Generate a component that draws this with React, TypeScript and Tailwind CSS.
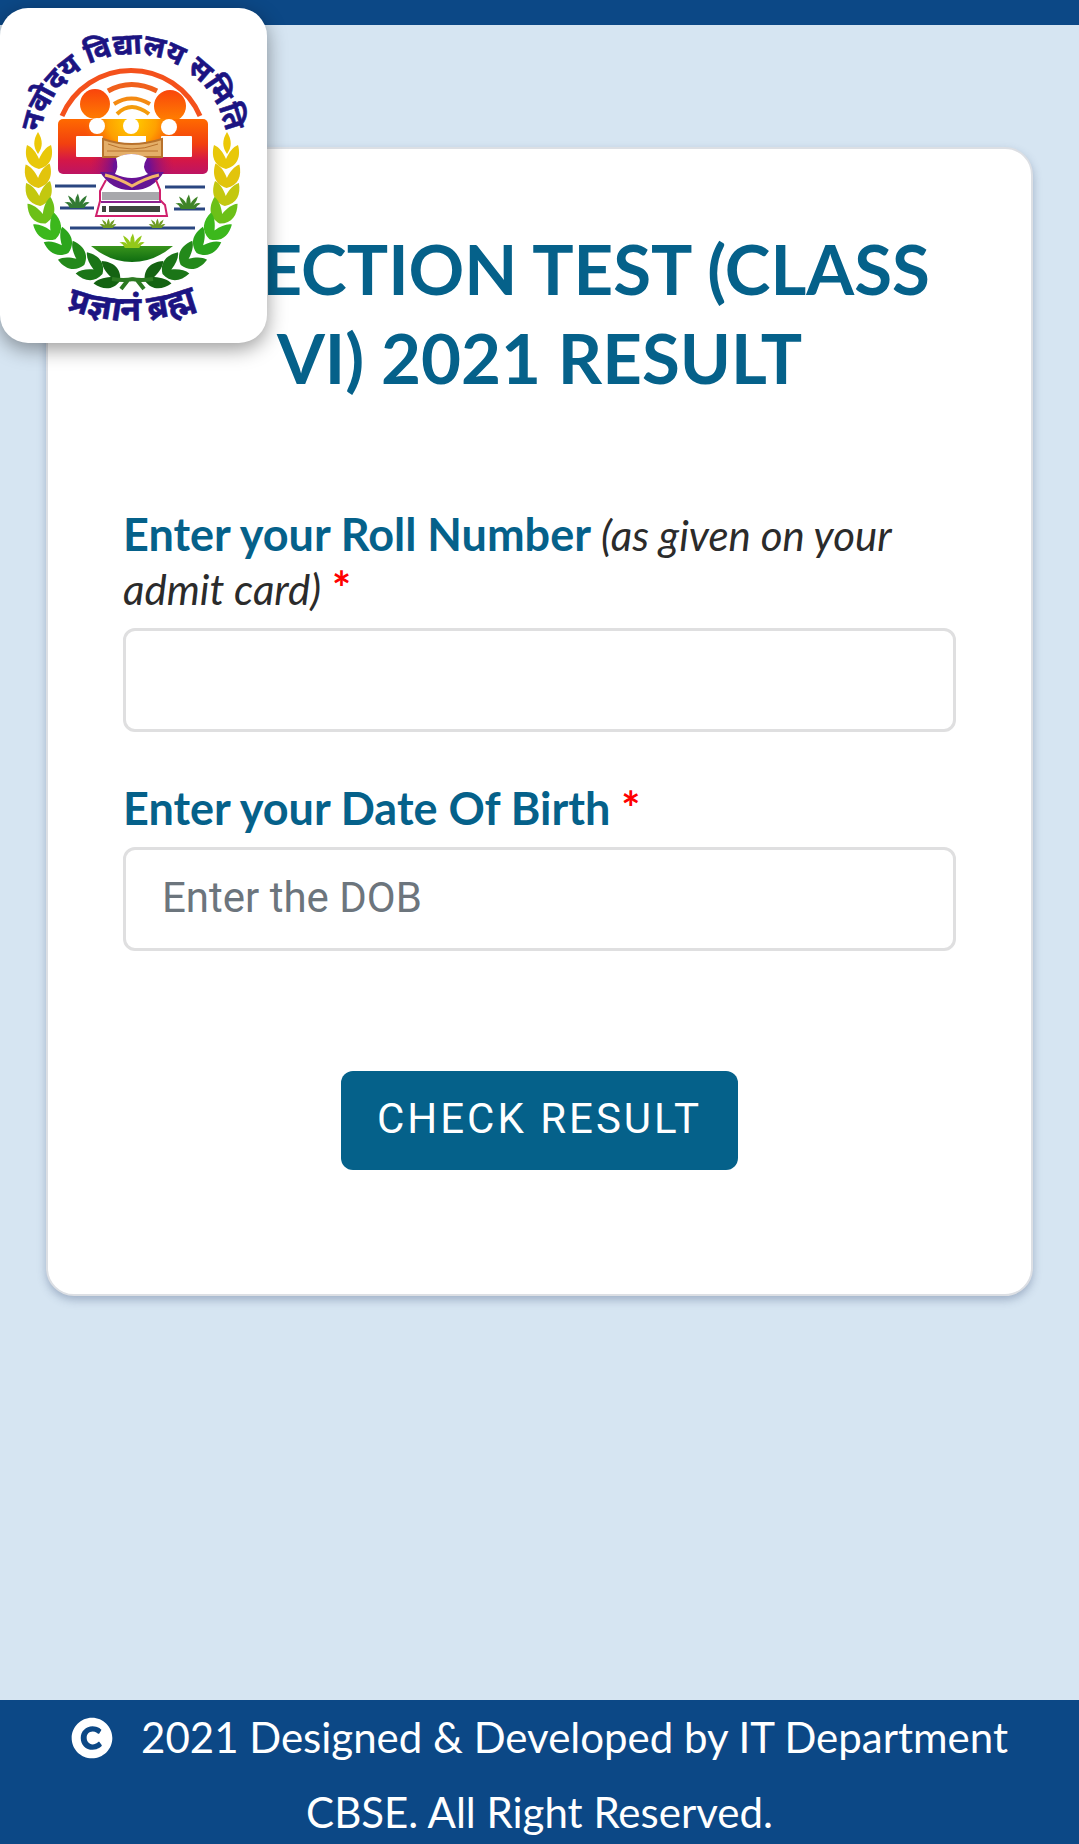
import { useState } from 'react';
import { FaCopyright } from 'react-icons/fa';

const LEAF = 'M0 13 C-12 10 -15 0 -12 -11 C-7 -9 -3 -4 0 3 C3 -4 7 -9 12 -11 C15 0 12 10 0 13Z';

// x, y, rotation, colour - one half of the wreath, the other half is mirrored
const WREATH: [number, number, number, string][] = [
  [39, 156, 0, '#e8c80a'],
  [38, 175, -2, '#e2c40c'],
  [39, 193, -5, '#c3c80f'],
  [42, 211, -16, '#6cc018'],
  [49, 228, -30, '#3cb81c'],
  [60, 243, -40, '#2ba51c'],
  [74, 257, -52, '#23891a'],
  [91, 268, -62, '#1b7517'],
  [108, 276, -70, '#146312'],
];

function WreathHalf() {
  return (
    <g>
      <path d="M38 132 C33 140 33 147 38 154 C43 147 43 140 38 132Z" fill="#ecc808" />
      {WREATH.map(([x, y, angle, fill]) => (
        <path key={y} d={LEAF} fill={fill} transform={`translate(${x} ${y}) rotate(${angle})`} />
      ))}
      <path d="M112 279 Q124 281 133 279 M121 289 L128 280" stroke="#2c7a22" strokeWidth="4" fill="none" />
    </g>
  );
}

function Grass({ x, y, scale, fill }: { x: number; y: number; scale: number; fill: string }) {
  return (
    <path
      transform={`translate(${x} ${y}) scale(${scale})`}
      fill={fill}
      d="M-8 0 Q-10 -5 -14 -6 Q-8 -8 -5 -4 Q-9 -10 -10 -14 Q-4 -11 -2 -6 Q-2 -12 1 -16 Q3 -11 3 -6 Q5 -11 11 -14 Q10 -9 6 -4 Q10 -8 14 -6 Q10 -4 8 0Z"
    />
  );
}

function Emblem() {
  return (
    <svg viewBox="0 8 267 335" className="w-full" role="img" aria-label="Navodaya Vidyalaya Samiti">
      <defs>
        <linearGradient id="board" x1="0" y1="119" x2="0" y2="174" gradientUnits="userSpaceOnUse">
          <stop offset="0" stopColor="#ff6a00" />
          <stop offset="0.45" stopColor="#f2400f" />
          <stop offset="0.75" stopColor="#d41747" />
          <stop offset="1" stopColor="#bd1463" />
        </linearGradient>
        <radialGradient id="glow" cx="132" cy="122" r="48" gradientUnits="userSpaceOnUse">
          <stop offset="0" stopColor="#ffd000" />
          <stop offset="0.5" stopColor="#ffa800" stopOpacity="0.9" />
          <stop offset="1" stopColor="#ff7a00" stopOpacity="0" />
        </radialGradient>
        <radialGradient id="shade" cx="132" cy="168" r="42" gradientUnits="userSpaceOnUse">
          <stop offset="0.4" stopColor="#6a0f96" />
          <stop offset="1" stopColor="#b01266" stopOpacity="0" />
        </radialGradient>
        <linearGradient id="head" x1="0" y1="88" x2="0" y2="121" gradientUnits="userSpaceOnUse">
          <stop offset="0" stopColor="#f9420c" />
          <stop offset="1" stopColor="#ff8000" />
        </linearGradient>
        <linearGradient id="bowl" x1="0" y1="246" x2="0" y2="263" gradientUnits="userSpaceOnUse">
          <stop offset="0" stopColor="#38941c" />
          <stop offset="1" stopColor="#0c6a10" />
        </linearGradient>
        <path id="motto-top" d="M39 148 A94 94 0 0 1 227 148" />
        <path id="motto-bottom" d="M64 308 Q132 334 200 306" />
      </defs>

      <g fill="#1c1482" stroke="#1c1482" strokeWidth="0.6" fontWeight="700" textAnchor="middle">
        <text fontSize="29">
          <textPath href="#motto-top" startOffset="50%">नवोदय विद्यालय समिति</textPath>
        </text>
        <text fontSize="34">
          <textPath href="#motto-bottom" startOffset="50%">प्रज्ञानं ब्रह्म</textPath>
        </text>
      </g>

      {/* rising sun */}
      <g fill="none">
        <path d="M62 116 A75 75 0 0 1 200 116" stroke="#f4511c" strokeWidth="5" />
        <path d="M108 91 Q131 78 157 91" stroke="#f0601c" strokeWidth="5" />
        <path d="M114 104 Q131 93 150 104" stroke="#f48a12" strokeWidth="4" />
        <path d="M117 114 Q131 100 149 114" stroke="#f49c0c" strokeWidth="4" />
      </g>

      {/* children */}
      <circle cx="95" cy="104" r="15" fill="url(#head)" />
      <circle cx="170" cy="106" r="16" fill="url(#head)" />
      <rect x="58" y="119" width="150" height="55" rx="5" fill="url(#board)" />
      <rect x="84" y="119" width="100" height="38" fill="url(#glow)" />
      <rect x="90" y="157" width="84" height="17" fill="url(#shade)" />
      <g fill="#fff">
        <circle cx="97" cy="126" r="8" />
        <circle cx="131" cy="126" r="8" />
        <circle cx="169" cy="127" r="8" />
        <rect x="76" y="136" width="27" height="21" rx="1" />
        <rect x="161" y="136" width="31" height="21" rx="1" />
        <rect x="118" y="136" width="28" height="7" />
      </g>
      <path d="M103 139 Q131 149 162 139 V157 H103Z" fill="#e4ae68" stroke="#b8722c" strokeWidth="2" />
      <path d="M108 144 Q131 154 158 144 M107 151 H158" fill="none" stroke="#b8722c" strokeWidth="1" />

      {/* reader and books */}
      <path d="M100 172 H164 Q152 191 132 190 Q112 191 100 172Z" fill="#651594" />
      <ellipse cx="131" cy="167" rx="18" ry="13" fill="#6a1296" />
      <path d="M116 158 Q131 150 147 158 Q144 163 144 167 Q145 172 148 174 Q132 182 115 174 Q119 167 116 158Z" fill="#fff" />
      <path d="M105 175 Q118 178 132 186 Q146 178 159 175" fill="none" stroke="#f2b66a" strokeWidth="3" />
      <path d="M106 180 L100 191 V201 L96 216 H167 L165 205 L160 200 V190 L156 180" fill="none" stroke="#d0206c" strokeWidth="2" />
      <path d="M101 202 H161" stroke="#8c2290" strokeWidth="2" />
      <rect x="102" y="192" width="57" height="8" fill="#a8a8ac" />
      <rect x="109" y="206" width="51" height="6" fill="#3d463e" />
      <rect x="102" y="206" width="4" height="6" fill="#3d463e" />

      {/* fields */}
      <g stroke="#2a4680" strokeWidth="3">
        <path d="M55 186 H96 M165 187 H205" />
        <path d="M60 208 H94 M174 209 H205" />
        <path d="M70 228 H195" />
      </g>
      <Grass x={77} y={208} scale={0.9} fill="#327a34" />
      <Grass x={188} y={209} scale={0.9} fill="#3f8428" />
      <Grass x={108} y={228} scale={0.6} fill="#6f9c24" />
      <Grass x={157} y={228} scale={0.6} fill="#6f9c24" />
      <path d="M91 246 H173 Q154 262 132 262 Q110 262 91 246Z" fill="url(#bowl)" />
      <Grass x={132} y={248} scale={0.9} fill="#93c81a" />

      <WreathHalf />
      <g transform="translate(265 0) scale(-1 1)">
        <WreathHalf />
      </g>
    </svg>
  );
}

const labelClass = 'block text-[45px] font-bold leading-[53px] text-[#05618a]';

const inputClass =
  'mt-3 block h-[104px] w-full rounded-xl border-[3px] border-[#dfdfe0] bg-white px-9 pb-1 font-[Roboto,sans-serif] text-[42px] text-gray-700 placeholder:text-[#6c757d] outline-none';

export default function App() {
  const [rollNumber, setRollNumber] = useState('');
  const [dob, setDob] = useState('');

  return (
    <div className="relative flex min-h-screen flex-col bg-[#d6e5f2] font-[Lato,'Noto_Sans',sans-serif]">
      <header className="h-[25px] bg-[#0c4886]">
        <a
          href="#"
          className="absolute left-0 top-2 z-10 block w-[267px] rounded-[28px] bg-white shadow-[0_6px_20px_rgba(0,0,0,0.4)]"
        >
          <Emblem />
        </a>
      </header>

      <main className="flex-1 px-[46px] pt-[122px]">
        <section className="rounded-[28px] border-2 border-[#dcdfe4] bg-white px-[75px] pb-[124px] pt-[75px] shadow-[0_4px_8px_rgba(60,80,120,0.35)]">
          <h1 className="text-center text-[69px] font-bold leading-[89px] text-[#05618a]">
            SELECTION TEST (CLASS VI) 2021 RESULT
          </h1>

          <form className="mt-[106px]" onSubmit={(e) => e.preventDefault()}>
            <div>
              <label htmlFor="roll" className={labelClass}>
                Enter your Roll Number{' '}
                <i className="text-[42px] font-normal text-[#2b2b2b]">(as given on your admit card)</i>{' '}
                <span className="text-[#f00]">*</span>
              </label>
              <input
                id="roll"
                type="text"
                className={inputClass}
                value={rollNumber}
                onChange={(e) => setRollNumber(e.target.value)}
              />
            </div>

            <div className="mt-[50px]">
              <label htmlFor="dob" className={labelClass}>
                Enter your Date Of Birth <span className="text-[#f00]">*</span>
              </label>
              <input
                id="dob"
                type="text"
                placeholder="Enter the DOB"
                className={inputClass}
                value={dob}
                onChange={(e) => setDob(e.target.value)}
              />
            </div>

            <div className="mt-[120px] text-center">
              <button
                type="submit"
                className="h-[99px] rounded-xl bg-[#05618a] px-9 pb-1 font-[Roboto,sans-serif] text-[42px] tracking-[3px] text-white"
              >
                CHECK RESULT
              </button>
            </div>
          </form>
        </section>
      </main>

      <footer className="h-36 overflow-hidden bg-[#0c4886] px-10 text-center text-[42px] leading-[75px] text-white">
        <p>
          <FaCopyright className="mr-7 inline-block align-[-6px]" />
          2021 Designed &amp; Developed by IT Department CBSE. All Right Reserved.
        </p>
      </footer>
    </div>
  );
}
